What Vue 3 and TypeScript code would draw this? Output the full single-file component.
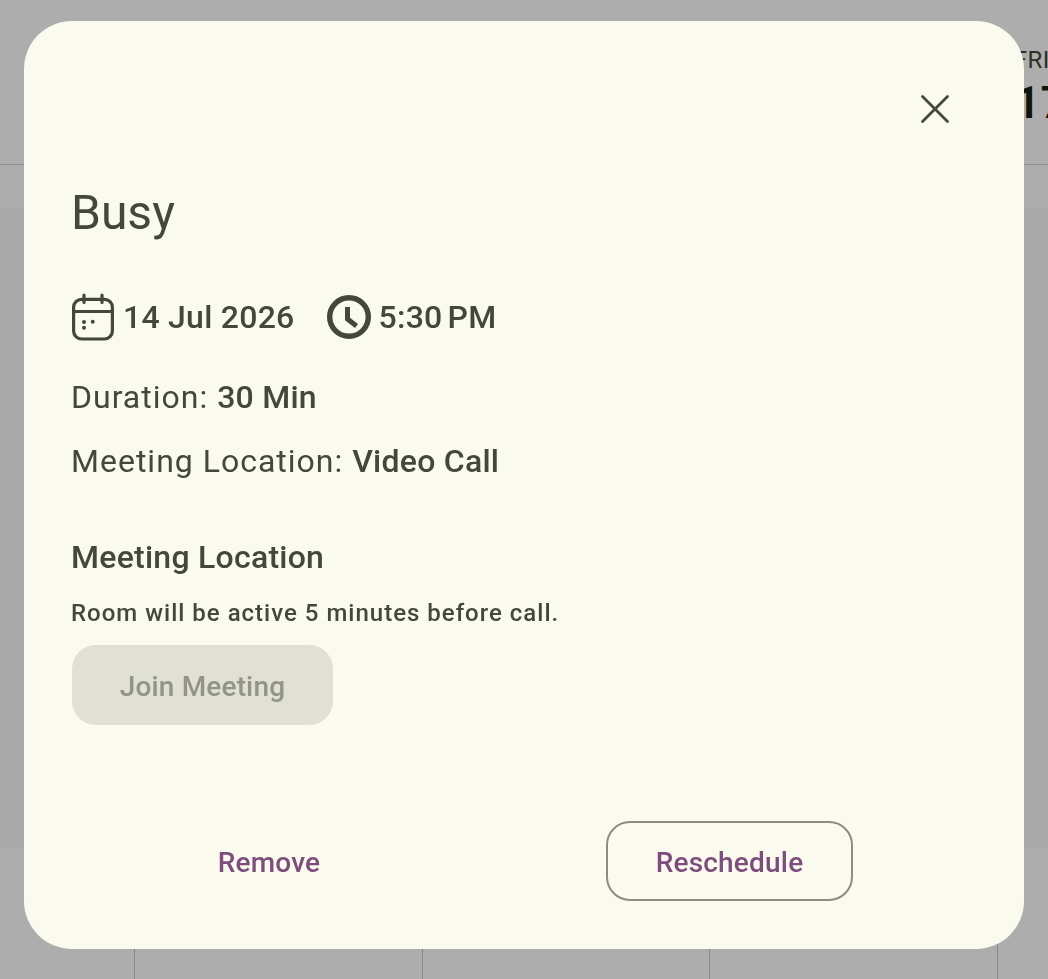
<script setup lang="ts">
const columns = [
  { day: 'TUE', date: '14' },
  { day: 'WED', date: '15' },
  { day: 'THU', date: '16' },
  { day: 'FRI', date: '17' },
];
</script>

<template>
  <div class="page">
    <div class="calendar">
      <div class="head">
        <div class="gutter"></div>
        <div v-for="col in columns" :key="col.day" class="head-cell">
          <span class="day">{{ col.day }}</span>
          <span class="date">{{ col.date }}</span>
        </div>
      </div>
      <div class="body">
        <div class="gutter"></div>
        <div v-for="col in columns" :key="col.day" class="column"></div>
      </div>
    </div>

    <div class="scrim">
      <div class="dialog">
        <div class="close-row">
          <button class="close" aria-label="Close">
            <svg width="32" height="32" viewBox="0 0 32 32" fill="none">
              <path d="M3.500 3.500L28.500 28.500M28.500 3.500L3.500 28.500" stroke="#45473a" stroke-width="2.800" stroke-linecap="round" />
            </svg>
          </button>
        </div>
        <h1 class="title">Busy</h1>
        <div class="when">
          <span class="when-item">
            <svg class="cal" width="44" height="48" viewBox="0 0 44 48" fill="none" stroke="#45473a" stroke-width="3.200">
              <rect x="2.600" y="6.400" width="38.800" height="39.600" rx="8" />
              <path d="M2.600 18.500H41.400M13 2V9.500M31 2V9.500" stroke-linecap="round" />
              <circle cx="13" cy="29" r="2" fill="#45473a" stroke="none" />
              <circle cx="21.700" cy="28.700" r="2" fill="#45473a" stroke="none" />
              <circle cx="13" cy="34.700" r="2" fill="#45473a" stroke="none" />
            </svg>
            14 Jul 2026
          </span>
          <span class="when-item time">
            <svg width="46" height="46" viewBox="0 0 46 46" fill="none" stroke="#45473a">
              <circle cx="23" cy="23" r="19.300" stroke-width="5.400" />
              <path d="M21.500 13V25L30.500 32" stroke-width="5" />
            </svg>
            <span>5:30<span class="thin-space"></span>PM</span>
          </span>
        </div>
        <p class="line first">Duration: <strong>30 Min</strong></p>
        <p class="line">Meeting Location: <strong>Video Call</strong></p>
        <h2 class="section">Meeting Location</h2>
        <p class="hint">Room will be active 5 minutes before call.</p>
        <button class="join" disabled>Join Meeting</button>
        <div class="actions">
          <button class="action text">Remove</button>
          <button class="action outlined">Reschedule</button>
        </div>
      </div>
    </div>
  </div>
</template>

<style scoped>
.page {
  position: relative;
  width: 1048px;
  height: 979px;
  overflow: hidden;
  background: #fff;
  font-family: Roboto, "Liberation Sans", sans-serif;
}

.calendar {
  width: 1400px;
  height: 100%;
}

.head {
  display: flex;
  height: 165px;
  border-bottom: 1px solid #d8d8d8;
  box-sizing: border-box;
}

.body {
  display: flex;
  height: 814px;
  background: repeating-linear-gradient(#f7f7f7 0 1px, #fafafa 1px 160px) 0 43px / 100% 640px no-repeat;
}

.gutter {
  width: 134px;
  flex-shrink: 0;
}

.head-cell {
  width: 287.600px;
  flex-shrink: 0;
  padding: 47px 0 0 17px;
  box-sizing: border-box;
  display: flex;
  flex-direction: column;
}

.day {
  font-size: 24px;
  line-height: 26px;
  letter-spacing: 0.5px;
  color: #45473a;
}

.date {
  font-size: 45px;
  line-height: 52px;
  font-weight: 600;
  color: #1b1c14;
  margin: 4px 0 0 1px;
}

.column {
  width: 287.600px;
  flex-shrink: 0;
  border-left: 1px solid #c9c9c9;
  box-sizing: border-box;
}

.scrim {
  position: absolute;
  inset: 0;
  background: rgba(0, 0, 0, 0.32);
}

.dialog {
  position: absolute;
  left: 24px;
  top: 21px;
  width: 1000px;
  height: 928px;
  box-sizing: border-box;
  padding: 72px 48px 48px 47px;
  border-radius: 48px;
  background: #fafaee;
  color: #45473a;
  display: flex;
  flex-direction: column;
  align-items: flex-start;
  will-change: transform;
}

.close-row {
  align-self: stretch;
  display: flex;
  justify-content: flex-end;
  margin-right: 25px;
}

.close {
  width: 32px;
  height: 32px;
  padding: 0;
  border: none;
  background: none;
}

.title {
  margin: 60px 0 0;
  font-size: 48px;
  line-height: 56px;
  font-weight: 400;
}

.when {
  display: flex;
  align-items: center;
  gap: 31px;
  margin-top: 52px;
  font-size: 32px;
  font-weight: 500;
  line-height: 48px;
  letter-spacing: 0.25px;
}

.when-item {
  display: flex;
  align-items: center;
  gap: 8px;
}

.time {
  gap: 7px;
}

.thin-space {
  display: inline-block;
  width: 5px;
}

.line {
  margin: 16px 0 0;
  font-size: 32px;
  line-height: 48px;
  letter-spacing: 1px;
}

.first {
  margin-top: 32px;
}

.line strong {
  font-weight: 500;
  letter-spacing: 0.25px;
}

.section {
  margin: 52px 0 0;
  font-size: 32px;
  line-height: 40px;
  font-weight: 500;
  letter-spacing: 0.25px;
}

.hint {
  margin: 20px 0 0;
  font-size: 24px;
  line-height: 32px;
  font-weight: 500;
  letter-spacing: 1px;
}

.join {
  margin: 16px 0 0 1px;
  width: 261px;
  height: 80px;
  padding: 2px 0 0;
  border: none;
  border-radius: 24px;
  background: #e0e0d5;
  color: #45473a80;
  font: inherit;
  font-size: 28px;
  font-weight: 500;
  letter-spacing: 0.15px;
}

.actions {
  margin-top: auto;
  align-self: stretch;
  display: flex;
  padding-left: 75px;
  gap: 214px;
}

.action {
  font: inherit;
  font-size: 28px;
  font-weight: 500;
  letter-spacing: 0.2px;
  color: #7d4e7d;
  background: none;
  height: 80px;
  border-radius: 24px;
  padding: 2px 0 0;
  width: 246px;
}

.text {
  border: none;
}

.outlined {
  width: 247px;
  border: 2px solid #8d8d7e;
}
</style>

<style>
body {
  overflow: hidden;
}
</style>
